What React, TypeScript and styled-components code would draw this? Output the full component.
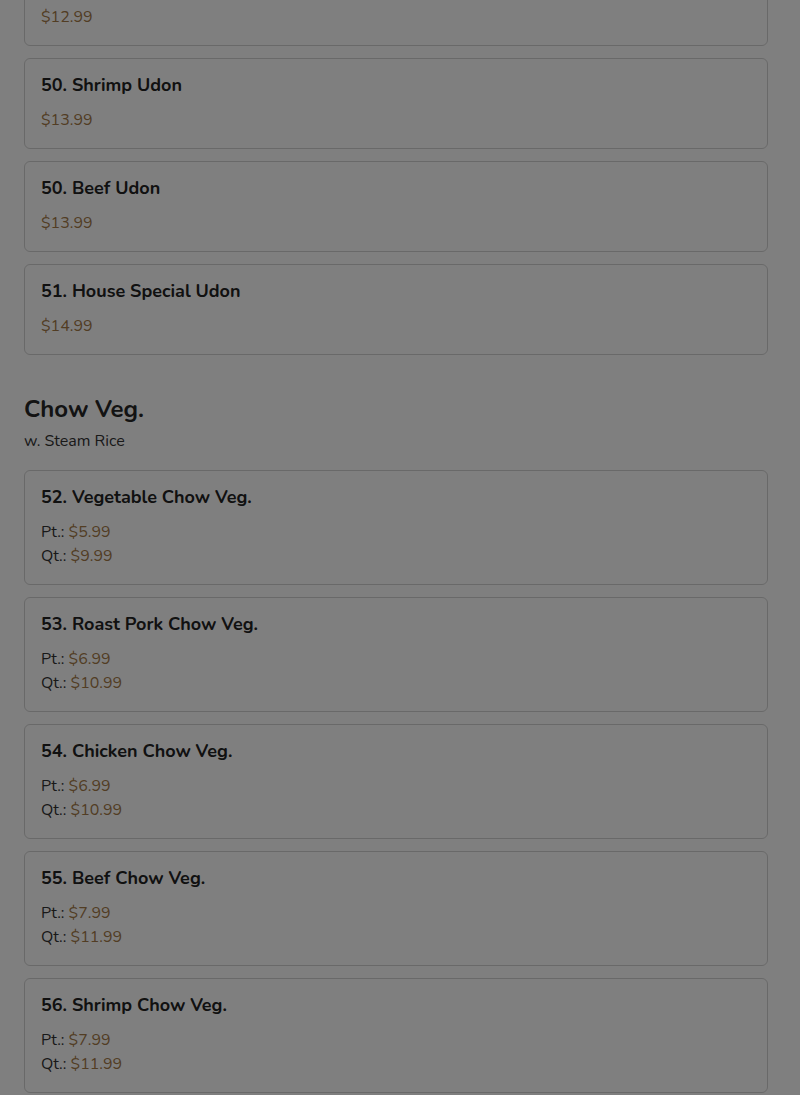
import React from "react";
import styled, { createGlobalStyle } from "styled-components";

const GlobalStyle = createGlobalStyle`
  html, body { margin: 0; padding: 0; background: #ffffff; }
  body { font-family: "Nunito", "Lato", "Noto Sans", sans-serif; color: #222; overflow: hidden; }
  * { box-sizing: border-box; }
`;

const Page = styled.div`
  padding: 0 32px 0 24px;
  height: 1095px;
  overflow: hidden;
`;

const Scroll = styled.div`
  margin-top: -45px;
  display: flex;
  flex-direction: column;
`;

const Section = styled.section<{ $first?: boolean }>`
  display: flex;
  flex-direction: column;
  margin-top: ${(p) => (p.$first ? "0" : "38px")};
`;

const Heading = styled.h2`
  margin: 0;
  font-size: 24px;
  line-height: 32px;
  font-weight: 700;
  color: #262626;
`;

const Sub = styled.p`
  margin: 4px 0 17px;
  font-size: 16px;
  line-height: 24px;
  color: #333;
`;

const List = styled.div`
  display: flex;
  flex-direction: column;
  gap: 12px;
`;

const Card = styled.div`
  border: 1px solid #d2d2d2;
  border-radius: 6px;
  padding: 16px;
  background: #fff;
  display: flex;
  flex-direction: column;
`;

const Title = styled.h3`
  margin: 0 0 12px;
  font-size: 18px;
  line-height: 21px;
  font-weight: 700;
  color: #222;
`;

const Line = styled.div`
  font-size: 16px;
  line-height: 24px;
  color: #333;
`;

const Price = styled.span`
  color: #a47a48;
`;

const Overlay = styled.div`
  position: fixed;
  inset: 0;
  background: rgba(0, 0, 0, 0.5);
  pointer-events: none;
`;

type Item = { name: string; price?: string; pt?: string; qt?: string };

const udon: Item[] = [
  { name: "49. Chicken Udon", price: "$12.99" },
  { name: "50. Shrimp Udon", price: "$13.99" },
  { name: "50. Beef Udon", price: "$13.99" },
  { name: "51. House Special Udon", price: "$14.99" },
];

const chowVeg: Item[] = [
  { name: "52. Vegetable Chow Veg.", pt: "$5.99", qt: "$9.99" },
  { name: "53. Roast Pork Chow Veg.", pt: "$6.99", qt: "$10.99" },
  { name: "54. Chicken Chow Veg.", pt: "$6.99", qt: "$10.99" },
  { name: "55. Beef Chow Veg.", pt: "$7.99", qt: "$11.99" },
  { name: "56. Shrimp Chow Veg.", pt: "$7.99", qt: "$11.99" },
];

const MenuCard = ({ item }: { item: Item }) => (
  <Card>
    <Title>{item.name}</Title>
    {item.price ? (
      <Line>
        <Price>{item.price}</Price>
      </Line>
    ) : (
      <>
        <Line>
          Pt.: <Price>{item.pt}</Price>
        </Line>
        <Line>
          Qt.: <Price>{item.qt}</Price>
        </Line>
      </>
    )}
  </Card>
);

export default function App() {
  return (
    <>
      <GlobalStyle />
      <Page>
        <Scroll>
          <Section $first>
            <List>
              {udon.map((it) => (
                <MenuCard key={it.name} item={it} />
              ))}
            </List>
          </Section>
          <Section>
            <Heading>Chow Veg.</Heading>
            <Sub>w. Steam Rice</Sub>
            <List>
              {chowVeg.map((it) => (
                <MenuCard key={it.name} item={it} />
              ))}
            </List>
          </Section>
        </Scroll>
      </Page>
      <Overlay />
    </>
  );
}
